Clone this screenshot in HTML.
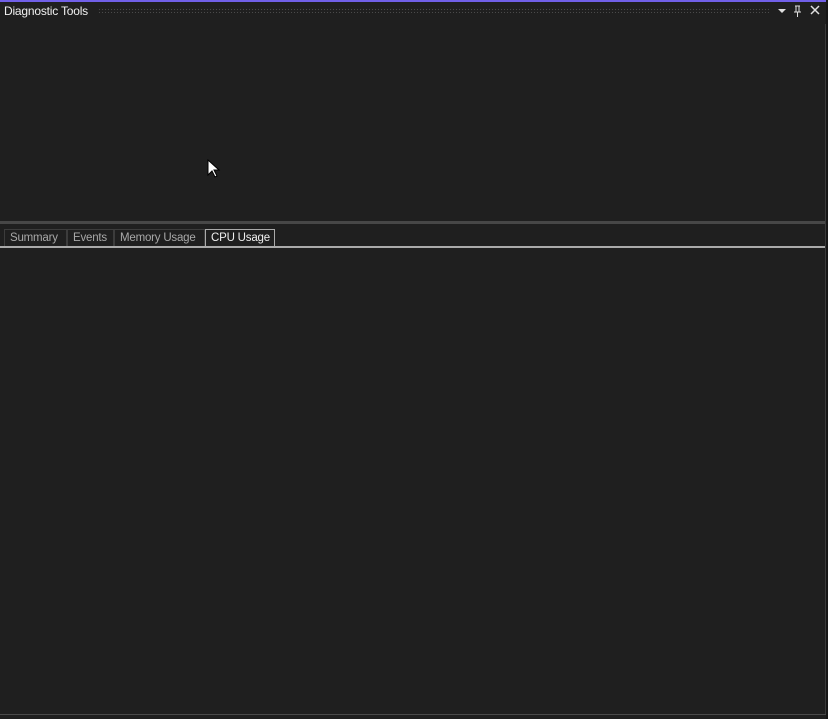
<!DOCTYPE html>
<html><head><style>
html,body{margin:0;padding:0;}
body{width:828px;height:719px;background:#1f1f1f;position:relative;overflow:hidden;font-family:"Segoe UI","Liberation Sans",sans-serif;}
.a{position:absolute;}
.tab{position:absolute;top:229px;height:17px;font-size:11.5px;line-height:16px;color:#a8a8a8;border:1px solid #3c3c3c;border-bottom:none;box-sizing:border-box;padding-left:5px;white-space:nowrap;overflow:hidden;letter-spacing:-0.2px;}
</style></head><body>
<div class="a" style="left:0;top:0;width:828px;height:2px;background:#7160e8"></div>
<div class="a" style="left:4px;top:3px;font-size:12px;color:#f0f0f0;line-height:16px;white-space:nowrap;letter-spacing:-0.2px">Diagnostic Tools</div>
<div class="a" style="left:98px;top:8px;width:672px;height:5px;background-image:radial-gradient(#4a4a4a 0.6px,transparent 0.8px);background-size:3px 3px"></div>
<svg class="a" style="left:776px;top:4px" width="50" height="14">
<path d="M2 5h8l-4 4z" fill="#e0e0e0"/>
<path d="M19 2h5M20 2v6M23 2v6M18 8h7M21.5 8v5" stroke="#e0e0e0" stroke-width="1" fill="none"/>
<path d="M35 2l8 8M43 2l-8 8" stroke="#e0e0e0" stroke-width="1.5"/>
</svg>
<svg class="a" style="left:207px;top:159px" width="14" height="20"><path d="M1 1v15l4-4 3 6 2-1-3-6h5z" fill="#fff" stroke="#000" stroke-width="1"/></svg>
<div class="a" style="left:0;top:221px;width:826px;height:3px;background:#474747"></div>
<div class="tab" style="left:4px;width:63px">Summary</div>
<div class="tab" style="left:67px;width:47px">Events</div>
<div class="tab" style="left:114px;width:91px">Memory Usage</div>
<div class="tab" style="left:205px;width:70px;color:#f0f0f0;border-color:#aaa">CPU Usage</div>
<div class="a" style="left:0;top:246px;width:826px;height:2px;background:#aaa"></div>
<div class="a" style="left:826px;top:0;width:2px;height:719px;background:#161616"></div>
<div class="a" style="left:825px;top:24px;width:1px;height:691px;background:#3a3a3a"></div>
<div class="a" style="left:0;top:714px;width:826px;height:1px;background:#4a4a4a"></div>
</body></html>
